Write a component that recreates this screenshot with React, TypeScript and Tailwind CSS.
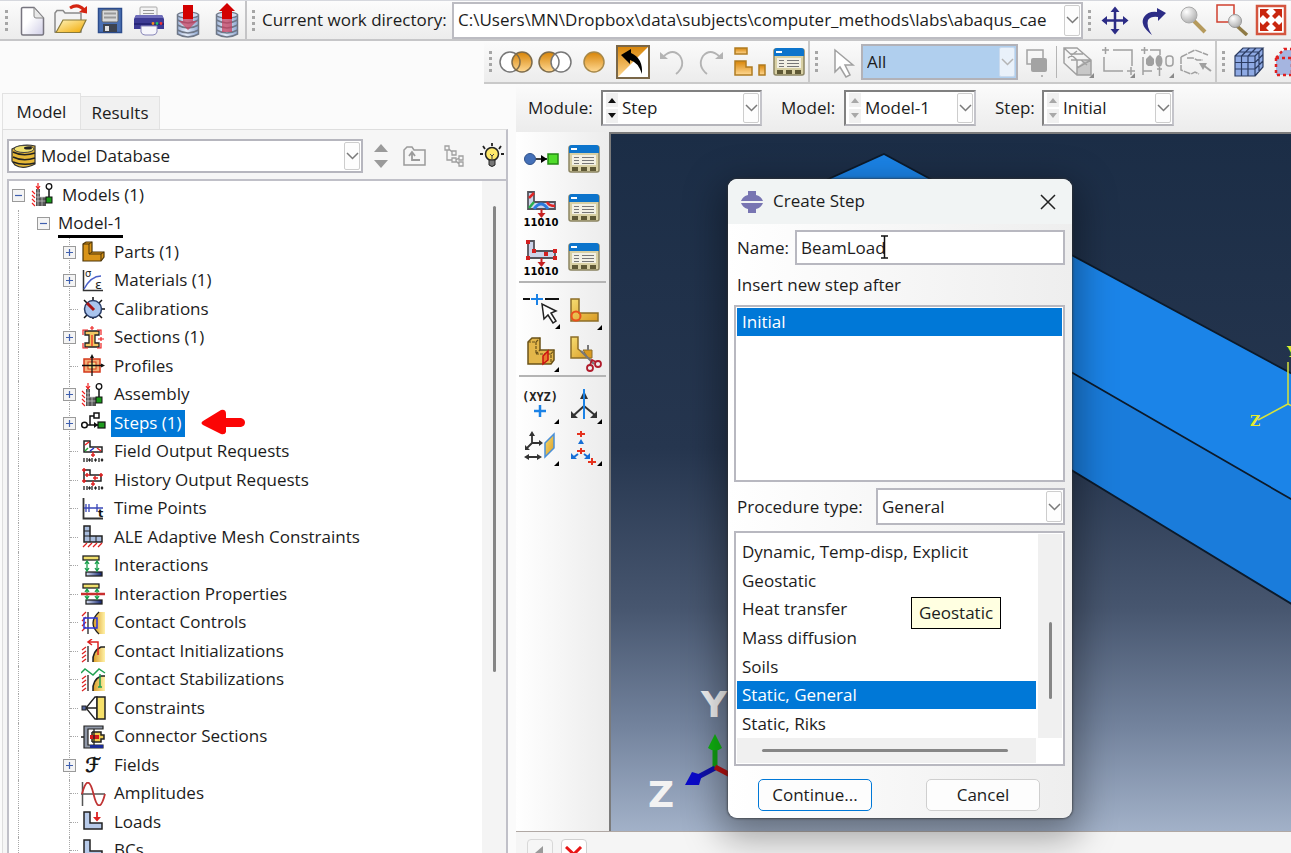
import React from "react";

const FONT = "font-['Open_Sans','Noto_Sans',sans-serif]";

interface SvgProps {
  children: React.ReactNode;
  w?: number;
  h?: number;
}

const Svg: React.FC<SvgProps> = ({ children, w = 32, h = 32 }) => (
  <svg width={w} height={h} viewBox={`0 0 ${w} ${h}`} fill="none" className="shrink-0" aria-hidden="true">
    {children}
  </svg>
);

const Defs = () => (
  <svg width="0" height="0" className="absolute" aria-hidden="true">
    <defs>
      <linearGradient id="orange" x1="0" y1="0" x2="0" y2="1">
        <stop offset="0" stopColor="#d88406" />
        <stop offset="1" stopColor="#ffd994" />
      </linearGradient>
      <linearGradient id="gold" x1="0" y1="0" x2="1" y2="1">
        <stop offset="0" stopColor="#f6dd72" />
        <stop offset="1" stopColor="#d99a22" />
      </linearGradient>
      <linearGradient id="folder" x1="0" y1="0" x2="1" y2="1">
        <stop offset="0" stopColor="#fff4bd" />
        <stop offset="1" stopColor="#f0a800" />
      </linearGradient>
      <linearGradient id="paper" x1="0" y1="0" x2="1" y2="1">
        <stop offset="0.4" stopColor="#ffffff" />
        <stop offset="1" stopColor="#cfcde6" />
      </linearGradient>
      <linearGradient id="steel" x1="0" y1="0" x2="1" y2="0">
        <stop offset="0" stopColor="#9db3d8" />
        <stop offset="0.4" stopColor="#e6edfa" />
        <stop offset="1" stopColor="#8fa8d2" />
      </linearGradient>
      <linearGradient id="navy" x1="0" y1="0" x2="1" y2="0">
        <stop offset="0" stopColor="#dbe3f6" />
        <stop offset="1" stopColor="#0d1f6b" />
      </linearGradient>
      <linearGradient id="cream" x1="0" y1="0" x2="1" y2="0">
        <stop offset="0" stopColor="#d99a22" />
        <stop offset="1" stopColor="#fff2a8" />
      </linearGradient>
      <radialGradient id="lens" cx="0.35" cy="0.3" r="0.8">
        <stop offset="0" stopColor="#ffffff" />
        <stop offset="1" stopColor="#a9a9a9" />
      </radialGradient>
    </defs>
  </svg>
);

/* ---------- toolbar icons ---------- */

const NewFile = () => (
  <Svg>
    <path d="M5.500 4.500Q5.500 3.500 7 3.500H18L27.500 14V29.500Q27.500 31 26 31H7Q5.500 31 5.500 29.500Z" fill="url(#paper)" stroke="#77757f" strokeWidth="1.500" />
    <path d="M18 3.500V12Q18 14 20 14H27.500Z" fill="#e8e8e8" stroke="#8a8a8a" />
  </Svg>
);

const OpenFile = () => (
  <Svg w={34}>
    <path d="M1 28V9L3 6.500H9L11 9H27V28Z" fill="#f3f3f3" stroke="#8a8a8a" strokeWidth="1.500" />
    <path d="M2 28.500L9 16H32L26 28.500Z" fill="url(#folder)" stroke="#8a7a3a" strokeWidth="1.200" />
    <path d="M16 4Q24-1 30 6" stroke="#d42512" strokeWidth="3" />
    <path d="M33 2V9.500L25 8Z" fill="#d42512" />
  </Svg>
);

const Save = () => (
  <Svg>
    <rect x="4.500" y="4.500" width="23" height="24" fill="#4a70b4" stroke="#2c4c8c" strokeWidth="1.500" />
    <rect x="8" y="6" width="16" height="12" rx="1.500" fill="#d9d9d9" stroke="#666" />
    <path d="M10 9.500H22M10 13.500H22" stroke="#9a9a9a" strokeWidth="2" />
    <rect x="9" y="20" width="14" height="8" fill="#3d4350" />
    <rect x="11" y="22" width="4" height="5" fill="#e2e2e2" />
  </Svg>
);

const Printer = () => (
  <Svg>
    <rect x="7" y="3" width="17" height="9" rx="1" fill="#f3f3f3" stroke="#aaa" />
    <path d="M10 6.500H21M10 9.500H21" stroke="#999" />
    <path d="M3 11H29L31 15V25H1V15Z" fill="#3d3b94" />
    <path d="M3 11H29L30.500 14H1.500Z" fill="#6f6dba" />
    <rect x="1" y="19" width="30" height="2" fill="#272678" />
    <circle cx="20" cy="19.500" r="1.400" fill="#f58a1f" />
    <circle cx="24" cy="19.500" r="1.400" fill="#1fbf6a" />
    <circle cx="28" cy="19.500" r="1.400" fill="#e33" />
    <path d="M8 22H24V28Q23 31 20 31H12Q9 31 8 28Z" fill="#f6f6fb" stroke="#8886b8" />
  </Svg>
);

const Database = ({ up = false }: { up?: boolean }) => (
  <Svg h={36}>
    <path d="M5.500 13V32Q16 38 26.500 32V13Z" fill="url(#steel)" stroke="#6f7888" strokeWidth="1.500" />
    <ellipse cx="16" cy="13" rx="10.500" ry="3" fill="#cfdaf0" stroke="#6f7888" strokeWidth="1.200" />
    <path d="M5.500 18Q16 24 26.500 18M5.500 23Q16 29 26.500 23M5.500 28Q16 34 26.500 28" stroke="#6f7888" strokeWidth="1.500" />
    {up ? (
      <>
        <path d="M11 17H21V30H11Z" fill="#c4405f" opacity="0.75" />
        <path d="M16 1L24 9H21V17H11V9H8Z" fill="#d30000" />
      </>
    ) : (
      <>
        <path d="M11 15H21V19H25L16 28L7 19H11Z" fill="#c4405f" opacity="0.75" />
        <path d="M11 3H21V17H11Z" fill="#d30000" />
      </>
    )}
  </Svg>
);

const Move = () => (
  <Svg>
    <path d="M16 5V28M4 16.500H28" stroke="#2c2c86" strokeWidth="2.500" />
    <path d="M16 2.500L20.500 8H11.500ZM16 30.500L20.500 25H11.500ZM2.500 16.500L8 12V21ZM29.500 16.500L24 12V21Z" fill="#2c2c86" />
  </Svg>
);

const Rotate = () => (
  <Svg>
    <path d="M14 31Q1 21 6 13Q10 7 19 8V4L28 9L20 17V13Q13 12 10 16Q8 22 14 31Z" fill="#2c2c86" />
  </Svg>
);

const Magnify = () => (
  <Svg>
    <path d="M17 17L28 28" stroke="#b59a5c" strokeWidth="4" />
    <circle cx="12" cy="11" r="8" fill="url(#lens)" stroke="#aaa" />
  </Svg>
);

const BoxZoom = () => (
  <Svg w={34}>
    <rect x="2" y="1" width="17" height="17" stroke="#d0402f" strokeWidth="1.500" />
    <path d="M22 22L32 31" stroke="#8f7a45" strokeWidth="3.500" />
    <circle cx="20" cy="17" r="6.500" fill="url(#lens)" stroke="#999" />
  </Svg>
);

const FitView = () => (
  <Svg>
    <rect x="2" y="2" width="28" height="28" fill="#fff" stroke="#d4553f" strokeWidth="2.500" />
    <path d="M5 5H14L11 8L15 12L12 15L8 11L5 14ZM27 5V14L24 11L20 15L17 12L21 8L18 5ZM5 27V18L8 21L12 17L15 20L11 24L14 27ZM27 27H18L21 24L17 20L20 17L24 21L27 18Z" fill="#c9270f" />
  </Svg>
);

const CirclesRight = () => (
  <Svg w={34}>
    <circle cx="11" cy="16" r="10" fill="#fff" stroke="#777" strokeWidth="1.500" />
    <circle cx="23" cy="16" r="10" fill="url(#orange)" stroke="#7d6b4a" strokeWidth="1.500" />
    <path d="M17 8A10 10 0 0 1 17 24" stroke="#7d6b4a" strokeWidth="1.500" />
  </Svg>
);

const CirclesLeft = () => (
  <Svg w={34}>
    <circle cx="11" cy="16" r="10" fill="url(#orange)" stroke="#7d6b4a" strokeWidth="1.500" />
    <circle cx="23" cy="16" r="10" fill="#fff" stroke="#777" strokeWidth="1.500" />
    <path d="M17 8A10 10 0 0 1 17 24" stroke="#777" strokeWidth="1.500" />
  </Svg>
);

const Circle = () => (
  <Svg>
    <circle cx="16" cy="16" r="10" fill="url(#orange)" stroke="#a78848" strokeWidth="1.500" />
  </Svg>
);

const ReplaceView = () => (
  <Svg w={34} h={34}>
    <rect x="1" y="1" width="32" height="32" fill="#fff" />
    <path d="M1 1H33L1 33Z" fill="url(#orange)" />
    <rect x="1" y="1" width="32" height="32" stroke="#7a6748" strokeWidth="2" />
    <path d="M5 10L15 4V8Q27 13 26 29Q22 17 14 15V19Z" fill="#000" />
  </Svg>
);

const Undo = ({ flip = false }: { flip?: boolean }) => (
  <Svg>
    <g transform={flip ? "matrix(-1 0 0 1 32 0)" : undefined}>
      <path d="M8 10Q17 2 24 10Q30 20 20 28" stroke="#b3b3b3" strokeWidth="1.800" />
      <path d="M4 6V13H12Z" fill="#b3b3b3" />
    </g>
  </Svg>
);

const ColorBlocks = () => (
  <Svg>
    <path d="M1 2H13V8H1Z" fill="url(#orange)" stroke="#b07c22" strokeWidth="1.500" />
    <path d="M1 15H12V21H18V29H1Z" fill="url(#orange)" stroke="#b07c22" strokeWidth="1.500" />
    <path d="M25 19H31V29H25Z" fill="url(#orange)" stroke="#b07c22" strokeWidth="1.500" />
  </Svg>
);

const Manager = () => (
  <Svg h={28}>
    <rect x="1" y="1" width="30" height="26" rx="2" fill="#d8d0a4" stroke="#8b8462" strokeWidth="1.500" />
    <path d="M1 3Q1 0 4 0H28Q31 0 31 3V8H1Z" fill="#0c74cc" />
    <rect x="3" y="3" width="6" height="2" fill="#fff" />
    <rect x="4" y="10" width="24" height="10" fill="#f2f0e4" />
    <path d="M6 12.500H11M6 15.500H11M6 18.500H11M14 12.500H26M14 15.500H26M14 18.500H26" stroke="#777" strokeWidth="1.200" />
    <path d="M4 22H10V26H4ZM13 22H19V26H13ZM22 22H28V26H22Z" fill="#5f5936" />
  </Svg>
);

const Pointer = () => (
  <Svg>
    <path d="M9 4V26L14 21L20 31L24 29L19 19H27Z" fill="#fff" stroke="#a0a0a0" strokeWidth="1.500" />
  </Svg>
);

const Overlap = () => (
  <Svg w={24}>
    <rect x="2" y="4" width="16" height="14" stroke="#a3a3a3" strokeWidth="1.500" />
    <rect x="6" y="12" width="16" height="14" rx="2" fill="#a3a3a3" />
    <circle cx="17" cy="30" r="1" fill="#a3a3a3" />
  </Svg>
);

const WireCube = () => (
  <Svg>
    <path d="M1 2H14L28 14V29H14L1 17ZM1 2L14 14V29M14 14H28M7 8H20M5 12L14 5M14 22L28 14M8 14H18L24 19" stroke="#a0a0a0" strokeWidth="1.500" />
    <path d="M14 22L22 14H28V29H14Z" fill="#a0a0a0" opacity="0.5" />
    <path d="M31 27V32H26Z" fill="#8a8a8a" />
  </Svg>
);

const DragBox = () => (
  <Svg w={34}>
    <path d="M1 4H8M4.500 1V8M12 4H31V20M3 11V25H22M26 25H34M30 21V29" stroke="#a0a0a0" strokeWidth="1.500" />
    <path d="M34 27V32H29Z" fill="#8a8a8a" />
  </Svg>
);

const DragShapes = () => (
  <Svg w={34}>
    <path d="M1 4H8M4.500 1V8M10 4H20V9M3 11V29M3 25H12M17 23H22M19.500 21V30" stroke="#a0a0a0" strokeWidth="1.500" />
    <path d="M10 9L14 13V18L12 20H8L6 18V13Z" fill="#a0a0a0" />
    <ellipse cx="19" cy="15" rx="3.500" ry="6" fill="#a0a0a0" />
    <rect x="26" y="10" width="7" height="10" rx="3" stroke="#a0a0a0" strokeWidth="1.500" />
    <path d="M34 27V32H29Z" fill="#8a8a8a" />
  </Svg>
);

const Reshape = () => (
  <Svg w={34}>
    <path d="M2 11L16 4L29 9M2 11V24L12 28L16 26L20 28M8 12H14L18 14H24" stroke="#a0a0a0" strokeWidth="1.500" strokeDasharray="7 1" />
    <path d="M32 25L24 19" stroke="#a0a0a0" strokeWidth="2" />
    <path d="M20 17H28L24 24Z" fill="#a0a0a0" />
  </Svg>
);

const MeshCube = () => (
  <Svg>
    <path d="M2 10L10 2H30V21L22 30H2Z" fill="#8faae4" />
    <path d="M2 10H22V30H2ZM2 10L10 2H30L22 10M30 2V21L22 30M8.500 10V30M15 10V30M2 16.500H22M2 23H22M8.500 10L16.500 2M15 10L23 2M6 6H26V26M22 16.500L30 8.500M22 23L30 15" stroke="#2c3c62" strokeWidth="1.200" />
  </Svg>
);

const SeedCube = () => (
  <Svg>
    <path d="M4 12L12 4H32V29H4Z" fill="#a5b5e0" />
    <path d="M4 12V29H32M4 12L12 3H32M4 12H32M20 12V29" stroke="#e02020" strokeWidth="2.500" strokeDasharray="3 3" />
  </Svg>
);

/* ---------- toolbox icons ---------- */

const More = () => <path d="M36 31V36H31Z" fill="#000" />;

const CreateStep = () => (
  <Svg w={36}>
    <path d="M13 16H24" stroke="#000" strokeWidth="1.500" />
    <path d="M18 12L24 16L18 20Z" fill="#000" />
    <circle cx="7" cy="16" r="5.500" fill="#4470b8" stroke="#31528a" />
    <rect x="25" y="11" width="10" height="10" fill="#4fdc2a" stroke="#258a14" strokeWidth="1.500" />
  </Svg>
);

const OutputIcon = ({ history = false }: { history?: boolean }) => (
  <Svg w={36} h={38}>
    <path d="M5 3H11V13H32V20H5Z" fill="#ccd4ea" stroke="#54545c" strokeWidth="1.800" />
    {history ? (
      <path d="M3 2H7V6H3ZM9 11H13V15H9ZM3 18H7V22H3ZM21 14H25V18H21ZM30 11H34V15H30ZM30 18H34V22H30Z" fill="#d32020" />
    ) : (
      <>
        <path d="M6 9L11 4M24 13Q26 17 32 17" stroke="#e02626" strokeWidth="2.500" />
        <path d="M6 19L11 13" stroke="#28b04c" strokeWidth="2.500" />
        <path d="M11 20Q18 10 25 20" stroke="#2c7be0" strokeWidth="3" />
      </>
    )}
    <path d="M18.500 20V26" stroke="#c62222" strokeWidth="2" />
    <path d="M14.500 24H22.500L18.500 29Z" fill="#c62222" />
    <text x="18" y="37" textAnchor="middle" fontSize="10" fontWeight="700" fontFamily="DejaVu Sans, sans-serif" fill="#000">11010</text>
  </Svg>
);

const PartitionEdge = () => (
  <Svg w={38} h={36}>
    <path d="M1 5H8M23 5H37" stroke="#111" strokeWidth="2" />
    <path d="M9 5H21M15 0V11" stroke="#1b82e6" strokeWidth="2" />
    <path d="M20 10L22 25L26 21L31 29L34 27L29 19L34 17Z" fill="#fff" stroke="#222" strokeWidth="1.500" />
    <path d="M38 30V35H33Z" fill="#000" />
  </Svg>
);

const PartitionCircle = () => (
  <Svg w={36} h={36}>
    <path d="M5 5H13V19H32V27H5Z" fill="url(#gold)" stroke="#8c6d28" strokeWidth="1.500" />
    <circle cx="10" cy="22" r="4.500" stroke="#e8501c" strokeWidth="2" />
    <More />
  </Svg>
);

const PartitionCell = () => (
  <Svg w={36} h={36}>
    <path d="M5 6L9 2H17V14H31V24L28 28H5Z" fill="#e3b64a" stroke="#6b531a" strokeWidth="1.500" />
    <path d="M5 6H13V18H28V28M13 6L17 2M13 18L17 14M28 18L31 14" stroke="#6b531a" strokeWidth="1.200" strokeDasharray="3 1" />
    <path d="M20 20L25 15V24L20 28Z" fill="#e8792c" stroke="#c11" strokeWidth="1.500" />
    <More />
  </Svg>
);

const CutPart = () => (
  <Svg w={38} h={40}>
    <path d="M6 3H13V15L24 24H6Z" fill="url(#gold)" stroke="#8c6d28" strokeWidth="1.500" />
    <path d="M18 16H27V24H23Z" fill="#d99a22" stroke="#8c6d28" />
    <path d="M16 17L29 30M23 11V16" stroke="#777" strokeWidth="2" />
    <circle cx="25" cy="34" r="3" stroke="#b01c2c" strokeWidth="1.800" />
    <circle cx="33" cy="30" r="3" stroke="#b01c2c" strokeWidth="1.800" />
    <path d="M25 31L27 26L31 28" stroke="#b01c2c" strokeWidth="1.800" />
  </Svg>
);

const DatumPoint = () => (
  <Svg w={36} h={36}>
    <text x="17" y="13" textAnchor="middle" fontSize="12" fontWeight="700" fontFamily="DejaVu Sans Mono, monospace" fill="#222">(XYZ)</text>
    <path d="M17 17V29M11 23H23" stroke="#1b82e6" strokeWidth="2.500" />
    <More />
  </Svg>
);

const DatumAxis = () => (
  <Svg w={36} h={36}>
    <path d="M18 18L7 28M18 18L30 28M18 5V20" stroke="#333" strokeWidth="2" />
    <path d="M14 11L18 3L22 11ZM5 23V30H12ZM31 23V30H24Z" fill="#333" />
    <path d="M18 1V31" stroke="#1b82e6" strokeWidth="2" />
    <More />
  </Svg>
);

const DatumPlane = () => (
  <Svg w={36} h={36}>
    <path d="M9 13V4M9 13H17M9 13L4 18M4 27H16" stroke="#333" strokeWidth="1.800" />
    <path d="M6 6L9 1L12 6ZM16 10L20 13L16 16ZM2 15V20H7ZM6 24L1 27L6 30ZM14 24L19 27L14 30Z" fill="#333" />
    <path d="M22 13L31 4V18L22 27Z" fill="url(#gold)" stroke="#4a90d9" strokeWidth="1.500" />
    <More />
  </Svg>
);

const DatumCsys = () => (
  <Svg w={36} h={36}>
    <path d="M11 4H19M15 1V7M11 21H19M15 18V24M22 32H30M26 28V35" stroke="#e5321e" strokeWidth="2" />
    <path d="M12 14L15 9L18 14ZM5 23L11 29H5ZM24 23L18 29H24Z" fill="#176fd6" />
    <path d="M8 27L12 24M22 27L18 24" stroke="#176fd6" strokeWidth="2" />
    <More />
  </Svg>
);

/* ---------- tree icons ---------- */

const AssemblyIcon = () => (
  <Svg w={24} h={24}>
    <path d="M5 6H9V14H15V23H5Z" fill="#555" />
    <path d="M5 10H9M5 14H15M5 18H15M7 6V23M11 14V23" stroke="#cfcfcf" strokeWidth="0.700" />
    <path d="M7 0V5M5 3L7 6L9 3M1 8L4 11M1 12L4 15M1 16L4 19M1 20L4 23" stroke="#e22" strokeWidth="1.200" />
    <path d="M18 6V14" stroke="#111" strokeWidth="1.500" />
    <circle cx="18" cy="3.500" r="2.800" fill="#fff" stroke="#111" strokeWidth="1.300" />
    <rect x="15" y="14" width="6" height="6" fill="#1a9a1a" stroke="#111" />
  </Svg>
);

const PartIcon = () => (
  <Svg w={24} h={24}>
    <path d="M2 4L5 2H11V12H23V17L20 21H2Z" fill="#d99418" stroke="#4c3508" strokeWidth="1.200" />
    <path d="M2 4H8V14H20V21M8 4L11 2M8 14L11 12M20 14L23 12" stroke="#4c3508" />
  </Svg>
);

const MaterialIcon = () => (
  <Svg w={24} h={24}>
    <path d="M2.500 1V21.500H22" stroke="#333" strokeWidth="1.500" />
    <path d="M3 20Q10 7 20 7" stroke="#4a60c8" strokeWidth="1.500" />
    <text x="4" y="8" fontSize="10" fontFamily="DejaVu Sans" fill="#222">σ</text>
    <text x="14" y="20" fontSize="13" fontFamily="DejaVu Sans" fill="#222">ε</text>
  </Svg>
);

const CalibrationIcon = () => (
  <Svg w={24} h={24}>
    <path d="M12 0V4M21 12H24M3 3L6 6M21 3L18 6M3 21L6 18M21 21L18 18M12 20V22" stroke="#111" strokeWidth="1.500" />
    <circle cx="12" cy="12" r="8.500" fill="#a9c4ee" stroke="#2a3d68" strokeWidth="1.500" />
    <path d="M6 6L13 13" stroke="#a81616" strokeWidth="3" />
  </Svg>
);

const SectionIcon = () => (
  <Svg w={24} h={24}>
    <path d="M4 5H18V9H14V17H18V21H4V17H8V9H4Z" fill="#f4c862" stroke="#222" strokeWidth="1.300" />
    <path d="M2 9V4H7M20 9V4H16M2 17V22H7M20 17V22H16M11 0V4M9 2H13M17 13H23M20 11V15M11 9V20" stroke="#e22" strokeWidth="1.200" />
  </Svg>
);

const ProfileIcon = () => (
  <Svg w={24} h={24}>
    <rect x="3" y="5" width="16" height="13" fill="#f4b078" stroke="#d43a1c" strokeWidth="1.500" />
    <rect x="7" y="8" width="8" height="7" fill="#fbe08c" stroke="#d43a1c" />
    <path d="M11 2V22M1 11.500H22" stroke="#111" strokeWidth="1.300" />
    <path d="M9 4L11 0L13 4ZM20 9.500L24 11.500L20 13.500Z" fill="#111" />
  </Svg>
);

const StepIcon = () => (
  <Svg w={26} h={24}>
    <circle cx="3.500" cy="14" r="2.800" stroke="#111" strokeWidth="1.500" />
    <path d="M7 14H17M9 14V5H13" stroke="#111" strokeWidth="1.500" />
    <rect x="13" y="2" width="5" height="5" fill="#fff" stroke="#111" strokeWidth="1.500" />
    <path d="M13 11L17 14L13 17Z" fill="#111" />
    <rect x="17" y="11" width="7" height="6" fill="#1f9a1f" stroke="#111" strokeWidth="1.200" />
  </Svg>
);

/* row of 1/0 marks under the output request icons */
const Bits = () => (
  <>
    <path d="M3 18V22M6 18V22M11 18V22M18 18V22" stroke="#222" strokeWidth="1.300" />
    <path d="M8.500 18L10 20L8.500 22L7 20ZM14.500 18L16 20L14.500 22L13 20ZM21 18L22.500 20L21 22L19.500 20Z" fill="#222" />
  </>
);

const FieldOutIcon = () => (
  <Svg w={24} h={24}>
    <path d="M3 1H9V7H21V12H3Z" stroke="#222" strokeWidth="1.500" />
    <path d="M4 5L8 2M16 8L20 11" stroke="#e22" strokeWidth="1.500" />
    <path d="M4 11L7 8" stroke="#2a3" strokeWidth="1.500" />
    <path d="M9 11L13 8" stroke="#23c" strokeWidth="1.500" />
    <path d="M12 12V17M10 15H14" stroke="#d22" strokeWidth="1.500" />
    <Bits />
  </Svg>
);

const HistoryOutIcon = () => (
  <Svg w={24} h={24}>
    <path d="M3 2H9V7H20V13H3Z" stroke="#222" strokeWidth="1.500" />
    <path d="M1 2H5M3 0V4M4 7H9M6 5V9M18 7H22M20 5V9M1 13H5M3 11V15M12 10H17M14 8V12M10 16H14M12 13V18" stroke="#d22" strokeWidth="1.500" />
    <Bits />
  </Svg>
);

const TimeIcon = () => (
  <Svg w={24} h={24}>
    <path d="M2.500 1V21.500H22" stroke="#333" strokeWidth="1.800" />
    <path d="M3 11H22M5 7V15M8 7V15M16 7V15" stroke="#3846b8" strokeWidth="1.300" />
    <text x="17" y="20" fontSize="11" fontWeight="700" fontFamily="DejaVu Sans" fill="#111">t</text>
  </Svg>
);

const AleIcon = () => (
  <Svg w={24} h={24}>
    <path d="M3 1H9V11H21V17H3Z" fill="#a9bcdc" stroke="#222" strokeWidth="1.500" />
    <path d="M3 6H9M3 11H9V17M15 11V17" stroke="#222" />
    <path d="M2 22L6 18M7 22L11 18M12 22L16 18M17 22L21 18" stroke="#d22" strokeWidth="1.300" />
  </Svg>
);

const InteractionIcon = ({ property = false }: { property?: boolean }) => (
  <Svg w={24} h={24}>
    <rect x="2" y="2" width="16" height="4" fill="#f0df6c" stroke="#222" strokeWidth="1.300" />
    <rect x="5" y="18" width="16" height="4" fill="url(#navy)" stroke="#222" strokeWidth="1.300" />
    <path d="M6 7V17M16 7V17M4 10L6 7L8 10M4 14L6 17L8 14M14 10L16 7L18 10M14 14L16 17L18 14" stroke="#19a04c" strokeWidth="1.300" />
    {property && <path d="M0 12H24" stroke="#c93030" strokeWidth="2.500" />}
  </Svg>
);

const ContactControlIcon = () => (
  <Svg w={26} h={24}>
    <path d="M24 1H18Q6 12 18 23H24Z" fill="url(#cream)" />
    <path d="M18 1Q6 12 18 23" stroke="#222" strokeWidth="1.300" />
    <path d="M1 5L5 1M1 10L5 6M1 15L5 11M1 20L5 16" stroke="#d22" strokeWidth="1.300" />
    <path d="M7 1V23" stroke="#222" strokeWidth="1.300" />
    <rect x="3" y="7" width="13" height="10" stroke="#2a34d8" strokeWidth="1.500" />
  </Svg>
);

const ContactIcon = ({ stable = false }: { stable?: boolean }) => (
  <Svg w={26} h={24}>
    <path d="M24 8H20Q11 12 12 23H24Z" fill="url(#cream)" />
    <path d="M24 8H20Q11 12 12 23" stroke="#222" strokeWidth="1.500" />
    <path d="M1 11L5 8M1 15L5 12M1 19L5 16M1 23L5 20" stroke="#d22" strokeWidth="1.300" />
    <path d="M7 7V23" stroke="#222" strokeWidth="1.300" />
    {stable ? (
      <path d="M0 5L4 1L12 7L18 1L24 5M19 6V19M17 19H21" stroke="#1fa050" strokeWidth="1.500" />
    ) : (
      <path d="M7 3H17V16M11 0L7 3L11 6" stroke="#d22" strokeWidth="1.500" />
    )}
  </Svg>
);

const ConstraintIcon = () => (
  <Svg w={26} h={24}>
    <path d="M5 12L14 1H16V23H14ZM5 12H16" fill="#fff" stroke="#222" strokeWidth="1.300" />
    <rect x="16" y="1" width="8" height="22" fill="#f6e06a" stroke="#222" strokeWidth="1.500" />
    <rect x="1" y="10" width="4" height="4" fill="#5567a0" stroke="#222" />
  </Svg>
);

const ConnectorIcon = () => (
  <Svg w={26} h={24}>
    <path d="M22 1H3V23H22V20H7V4H22Z" fill="#9098a8" stroke="#222" strokeWidth="1.200" />
    <path d="M9 20H22V23H9Z" fill="#1b2b98" />
    <path d="M11 7V17M11 7H20V10H23V14H20V17H11" stroke="#222" strokeWidth="1.500" fill="#f0cc50" />
    <rect x="9" y="10" width="9" height="4" fill="#d41c1c" />
    <path d="M0 12H3M13 4V20" stroke="#222" strokeWidth="1.300" />
  </Svg>
);

const FieldIcon = () => (
  <Svg w={26} h={26}>
    <text x="12" y="20" textAnchor="middle" fontSize="20" fontFamily="DejaVu Sans, sans-serif" fill="#111" stroke="#111" strokeWidth="0.700">ℱ</text>
  </Svg>
);

const AmplitudeIcon = () => (
  <Svg w={26} h={24}>
    <path d="M1.500 0V24M0 12H24" stroke="#555" strokeWidth="1.500" />
    <path d="M1 12Q7-11 12.500 12T24 12" stroke="#c03434" strokeWidth="1.800" />
  </Svg>
);

const LoadIcon = () => (
  <Svg w={24} h={24}>
    <path d="M3 2H9V13H21V19H3Z" fill="#b8cbea" stroke="#222" strokeWidth="1.500" />
    <path d="M16 2V10" stroke="#d22" strokeWidth="1.800" />
    <path d="M12 7H20L16 11.500Z" fill="#d22" />
  </Svg>
);

const BcIcon = () => (
  <Svg w={24} h={24}>
    <path d="M3 1H9V12H21V18H3Z" fill="#b8cbea" stroke="#222" strokeWidth="1.500" />
  </Svg>
);

/* ---------- shared bits ---------- */

const Grip = () => (
  <div className="flex w-[12px] shrink-0 flex-col items-center gap-[3px]">
    {[0, 1, 2, 3].map((i) => (
      <span key={i} className="h-[3px] w-[3px] bg-[#a6a6a6]" />
    ))}
  </div>
);

const Tool = ({ label, children }: { label: string; children: React.ReactNode }) => (
  <button type="button" aria-label={label} className="flex w-[39px] shrink-0 items-center justify-center">
    {children}
  </button>
);

const Chevron = ({ muted = false }: { muted?: boolean }) => (
  <span
    className={`pointer-events-none absolute inset-y-[1px] right-[1px] flex w-[16px] items-center justify-center rounded-[2px] border ${
      muted ? "border-[#c9daee] bg-[#e9f1fa]" : "border-[#cdcdcd] bg-[#fdfdfd]"
    }`}
  >
    <svg width="13" height="8" viewBox="0 0 13 8" fill="none">
      <path d="M1 1L6.500 6.500L12 1" stroke={muted ? "#b5b5b5" : "#7a7a7a"} strokeWidth="1.500" />
    </svg>
  </span>
);

const Arrows = ({ muted = false }: { muted?: boolean }) => (
  <svg width="12" height="30" viewBox="0 0 12 30" className="ml-[3px] shrink-0" aria-hidden="true">
    <rect width="12" height="14" fill="#f0f0f0" />
    <rect y="16" width="12" height="14" fill="#f0f0f0" />
    <path d="M2 10L6 5L10 10ZM2 20H10L6 25Z" fill={muted ? "#a8a8a8" : "#111"} />
  </svg>
);

interface ModuleFieldProps {
  id: string;
  label: string;
  value: string;
  labelWidth: string;
  width: string;
  muted?: boolean;
}

const ModuleField: React.FC<ModuleFieldProps> = ({ id, label, value, labelWidth, width, muted }) => (
  <div className="flex shrink-0 items-center">
    <label htmlFor={id} className={`${labelWidth} whitespace-nowrap`}>
      {label}
    </label>
    <div className={`${width} relative flex h-[36px] items-center border-2 border-t-[#808080] border-r-[#c4c4ca] border-b-[#b4b4ba] border-l-[#808080] bg-white`}>
      <Arrows muted={muted} />
      <select id={id} defaultValue={value} className="h-full w-full appearance-none pl-[4px] outline-none">
        <option>{value}</option>
      </select>
      <Chevron />
    </div>
  </div>
);

/* ---------- top bars ---------- */

const TopToolbar = () => (
  <header className="flex h-[41px] shrink-0 overflow-hidden border-t border-b-2 border-t-[#d6d8de] border-b-[#c6c6c8] bg-linear-to-b from-[#fcfcfc] to-[#ececec]">
    <div className="flex w-[247px] shrink-0 items-center border-r-2 border-[#c4c4c6]">
      <Grip />
      <Tool label="New"><NewFile /></Tool>
      <Tool label="Open"><OpenFile /></Tool>
      <Tool label="Save"><Save /></Tool>
      <Tool label="Print"><Printer /></Tool>
      <Tool label="Import database"><Database /></Tool>
      <Tool label="Export database"><Database up /></Tool>
    </div>
    <div className="flex min-w-0 flex-1 items-center">
      <Grip />
      <label htmlFor="cwd" className="w-[193px] shrink-0 pl-[3px] whitespace-nowrap">
        Current work directory:
      </label>
      <div className="relative h-[37px] min-w-0 flex-1 border-2 border-[#bcbcc2] bg-white">
        <select id="cwd" className="h-full w-full appearance-none pl-[4px] outline-none">
          <option>C:\Users\MN\Dropbox\data\subjects\computer_methods\labs\abaqus_cae</option>
        </select>
        <Chevron />
      </div>
    </div>
    <div className="flex w-[208px] shrink-0 items-center overflow-hidden">
      <Grip />
      <Tool label="Pan view"><Move /></Tool>
      <Tool label="Rotate view"><Rotate /></Tool>
      <Tool label="Magnify view"><Magnify /></Tool>
      <Tool label="Box zoom"><BoxZoom /></Tool>
      <Tool label="Auto-fit view"><FitView /></Tool>
    </div>
  </header>
);

const ViewToolbar = () => (
  <div className="ml-[484px] flex h-[43px] shrink-0 items-center overflow-hidden border-b-2 border-[#c9c9c9] bg-linear-to-b from-[#fbfbfb] to-[#ececec]">
    <Grip />
    <Tool label="Replace all"><CirclesRight /></Tool>
    <Tool label="Add"><CirclesLeft /></Tool>
    <Tool label="Either"><Circle /></Tool>
    <Tool label="Replace view"><ReplaceView /></Tool>
    <Tool label="Undo"><Undo /></Tool>
    <Tool label="Redo"><Undo flip /></Tool>
    <Tool label="Color code"><ColorBlocks /></Tool>
    <Tool label="Display group manager"><Manager /></Tool>
    <span className="h-full border-l-2 border-[#c9c9c9]" />
    <Grip />
    <Tool label="Select"><Pointer /></Tool>
    <div className="relative h-[36px] w-[157px] shrink-0 border-2 border-[#b2b2b8] bg-[#b0cfee]">
      <select aria-label="Selection filter" className="h-full w-full appearance-none pl-[4px] outline-none">
        <option>All</option>
      </select>
      <Chevron muted />
    </div>
    <div className="flex w-[39px] shrink-0 justify-center border-r border-[#b5b5b5]"><Overlap /></div>
    <div className="flex shrink-0 pl-[2px]">
      <Tool label="Select inside"><WireCube /></Tool>
      <Tool label="Drag rectangle"><DragBox /></Tool>
      <Tool label="Drag shapes"><DragShapes /></Tool>
      <Tool label="Drag polygon"><Reshape /></Tool>
    </div>
    <span className="h-full border-l-2 border-[#c9c9c9]" />
    <Grip />
    <Tool label="Mesh part"><MeshCube /></Tool>
    <Tool label="Seed part"><SeedCube /></Tool>
  </div>
);

/* ---------- model tree ---------- */

interface TreeItem {
  label: string;
  icon: React.ReactNode;
  expandable?: boolean;
  selected?: boolean;
}

const items: TreeItem[] = [
  { label: "Parts (1)", icon: <PartIcon />, expandable: true },
  { label: "Materials (1)", icon: <MaterialIcon />, expandable: true },
  { label: "Calibrations", icon: <CalibrationIcon /> },
  { label: "Sections (1)", icon: <SectionIcon />, expandable: true },
  { label: "Profiles", icon: <ProfileIcon /> },
  { label: "Assembly", icon: <AssemblyIcon />, expandable: true },
  { label: "Steps (1)", icon: <StepIcon />, expandable: true, selected: true },
  { label: "Field Output Requests", icon: <FieldOutIcon /> },
  { label: "History Output Requests", icon: <HistoryOutIcon /> },
  { label: "Time Points", icon: <TimeIcon /> },
  { label: "ALE Adaptive Mesh Constraints", icon: <AleIcon /> },
  { label: "Interactions", icon: <InteractionIcon /> },
  { label: "Interaction Properties", icon: <InteractionIcon property /> },
  { label: "Contact Controls", icon: <ContactControlIcon /> },
  { label: "Contact Initializations", icon: <ContactIcon /> },
  { label: "Contact Stabilizations", icon: <ContactIcon stable /> },
  { label: "Constraints", icon: <ConstraintIcon /> },
  { label: "Connector Sections", icon: <ConnectorIcon /> },
  { label: "Fields", icon: <FieldIcon />, expandable: true },
  { label: "Amplitudes", icon: <AmplitudeIcon /> },
  { label: "Loads", icon: <LoadIcon /> },
  { label: "BCs", icon: <BcIcon /> },
];

const Expander = ({ open = false }: { open?: boolean }) => (
  <button
    type="button"
    aria-label={open ? "Collapse" : "Expand"}
    className="flex h-[13px] w-[13px] shrink-0 items-center justify-center border border-[#9a9a9a] bg-[#f4f4f4]"
  >
    <svg width="9" height="9" viewBox="0 0 9 9">
      <path d={open ? "M1 4.500H8" : "M1 4.500H8M4.500 1V8"} stroke="#3f5fae" strokeWidth="1.200" />
    </svg>
  </button>
);

const ModelTree = () => (
  <div className="flex min-h-0 flex-1 overflow-hidden border-t-2 border-l-2 border-[#c0c0c8] bg-white">
    <ul role="tree" className="grid h-[684px] min-w-0 flex-1 auto-rows-fr">
      <li role="treeitem" className="flex items-center pl-[3px]">
        <Expander open />
        <span className="ml-[6px] flex w-[28px]"><AssemblyIcon /></span>
        <span className="pl-[3px]">Models (1)</span>
      </li>
      <li role="treeitem" className="flex items-center pl-[9px]">
        <span className="w-[19px] self-stretch border-l border-dotted border-[#a8a8a8]" />
        <Expander open />
        <span className="ml-[8px] border-b-[3px] border-black leading-[25px]">Model-1</span>
      </li>
      {items.map((item) => (
        <li key={item.label} role="treeitem" aria-selected={!!item.selected} className="flex items-center pl-[9px]">
          <span className="w-[51px] shrink-0 self-stretch border-l border-dotted border-[#a8a8a8]" />
          <span className="flex w-[12px] shrink-0 items-center self-stretch border-l border-dotted border-[#a8a8a8]">
            {item.expandable ? (
              <span className="-ml-[7px]"><Expander /></span>
            ) : (
              <span className="w-[8px] border-t border-dotted border-[#a8a8a8]" />
            )}
          </span>
          <span className="flex w-[30px] shrink-0">{item.icon}</span>
          <span className={`h-[27px] px-[3px] leading-[26px] ${item.selected ? "bg-[#0078d7] text-white" : ""}`}>
            {item.label}
          </span>
          {item.selected && (
            <svg width="44" height="28" viewBox="0 0 44 28" className="ml-[16px] shrink-0" aria-hidden="true">
              <path d="M2 12L20 1Q25 0 25 5V9H40Q44 10 44 13.500Q44 17 40 18H25V23Q24 26 20 25L2 16Q-1 14 2 12Z" fill="#fb0505" />
            </svg>
          )}
        </li>
      ))}
    </ul>
    <div className="flex w-[24px] justify-center bg-[#f4f4f4] pt-[25px]">
      <span className="h-[466px] w-[3px] rounded-full bg-[#868686]" />
    </div>
  </div>
);

const LeftPanel = () => (
  <aside className="flex w-[508px] shrink-0 flex-col pt-[9px]">
    <div role="tablist" className="flex items-end pl-[2px]">
      <button type="button" role="tab" aria-selected="true" className="h-[36px] w-[79px] border border-b-0 border-[#e2e2e2] bg-[#f9f9f9]">
        Model
      </button>
      <button type="button" role="tab" aria-selected="false" className="h-[33px] w-[79px] border border-b-0 border-l-0 border-[#e2e2e2] bg-[#f1f1f1]">
        Results
      </button>
    </div>
    <div className="ml-[2px] flex min-h-0 flex-1 flex-col border-t border-r-2 border-l border-[#dedede] border-r-[#c0c0c8] bg-[#f6f6f6] pt-[9px] pl-[4px]">
      <div className="mb-[6px] flex h-[34px] shrink-0 items-center">
        <div className="relative flex h-full w-[356px] shrink-0 items-center border-2 border-[#b6b6be] bg-white">
          <svg width="26" height="26" viewBox="0 0 26 26" className="ml-[2px] shrink-0" aria-hidden="true">
            <path d="M1 6Q12 0 24 3V21Q12 27 4 22L1 18Z" fill="#e6b838" stroke="#333" strokeWidth="1.200" />
            <path d="M2 9Q12 14 24 10M2 14Q12 19 24 15M2 19Q12 23 24 20" stroke="#222" strokeWidth="1.500" fill="none" />
            <ellipse cx="13" cy="6" rx="10" ry="3.500" fill="#f0e070" stroke="#444" />
            <ellipse cx="17" cy="5" rx="4" ry="1.500" fill="#222" />
          </svg>
          <select aria-label="Tree root" className="h-full w-full appearance-none pl-[4px] outline-none">
            <option>Model Database</option>
          </select>
          <Chevron />
        </div>
        <button type="button" aria-label="Move" className="flex w-[36px] shrink-0 justify-center">
          <Svg w={14} h={26}><path d="M0 9L7 1L14 9ZM0 17H14L7 25Z" fill="#9a9a9a" /></Svg>
        </button>
        <button type="button" aria-label="Up one level" className="flex w-[31px] shrink-0 justify-center">
          <Svg w={24} h={24}>
            <path d="M1 21V6L4 3H9L11 6H22V21Z" stroke="#9b9b9b" strokeWidth="1.500" />
            <path d="M9 9V16H17M6 12L9 8L12 12" stroke="#9b9b9b" strokeWidth="1.800" />
          </Svg>
        </button>
        <button type="button" aria-label="Filter tree" className="flex w-[47px] shrink-0 justify-center">
          <Svg w={24} h={24}>
            <path d="M3 2H7V6H3ZM10 7H14V11H10ZM10 14H14V18H10ZM17 12H21V16H17ZM17 18H21V22H17ZM5 6V16H10M7 5L10 8M14 16L17 14M14 17L17 20" stroke="#a0a0a0" strokeWidth="1.300" />
          </Svg>
        </button>
        <button type="button" aria-label="Tips" className="flex w-[30px] shrink-0 justify-center">
          <Svg w={26} h={28}>
            <path d="M13 1V4M4 4L6 7M22 4L20 7M1 12H4M22 12H25" stroke="#222" strokeWidth="1.800" />
            <circle cx="13" cy="12" r="6.500" fill="#ffe96a" stroke="#222" strokeWidth="1.500" />
            <path d="M10 18H16V23Q13 26 10 23Z" fill="#777" stroke="#222" />
            <path d="M11 12L13 14L15 12M13 14V18" stroke="#444" />
          </Svg>
        </button>
      </div>
      <ModelTree />
    </div>
  </aside>
);

/* ---------- work area ---------- */

const Toolbox = () => (
  <nav className="w-[93px] shrink-0 bg-linear-to-r from-white to-[#ececec] px-[3px]">
    <div className="grid auto-rows-[49px] grid-cols-2 place-items-center border-b-2 border-[#b4b4b4] pt-[2px]">
      <button type="button" aria-label="Create step"><CreateStep /></button>
      <button type="button" aria-label="Step manager"><Manager /></button>
      <button type="button" aria-label="Create field output"><OutputIcon /></button>
      <button type="button" aria-label="Field output manager"><Manager /></button>
      <button type="button" aria-label="Create history output"><OutputIcon history /></button>
      <button type="button" aria-label="History output manager"><Manager /></button>
    </div>
    <div className="grid auto-rows-[42px] grid-cols-2 place-items-center border-b-2 border-[#b4b4b4] pt-[8px]">
      <button type="button" aria-label="Partition edge"><PartitionEdge /></button>
      <button type="button" aria-label="Partition face"><PartitionCircle /></button>
      <button type="button" aria-label="Partition cell"><PartitionCell /></button>
      <button type="button" aria-label="Cut part"><CutPart /></button>
    </div>
    <div className="grid auto-rows-[42px] grid-cols-2 place-items-center pt-[8px]">
      <button type="button" aria-label="Create datum point"><DatumPoint /></button>
      <button type="button" aria-label="Create datum axis"><DatumAxis /></button>
      <button type="button" aria-label="Create datum plane"><DatumPlane /></button>
      <button type="button" aria-label="Create datum csys"><DatumCsys /></button>
    </div>
  </nav>
);

const Viewport = () => (
  <main className="relative min-w-0 flex-1 overflow-hidden border-t-2 border-l-2 border-[#7b7b7b] bg-[linear-gradient(180deg,#1b2d46_0%,#26364f_45%,#47566f_68%,#73839d_85%,#a2b1c8_100%)]">
    <svg className="absolute inset-0 h-full w-full" aria-hidden="true">
      <g transform="translate(-611 -134)" strokeWidth="1.800">
        <path d="M884 154L1400 432V562L884 264L760 210Z" fill="#1b84e8" />
        <path d="M884 264L1400 562V670L884 356Z" fill="#1a7cdb" />
        <path d="M760 210L884 154L1400 432M884 264L1400 562M884 356L1400 670" stroke="#0c1a2a" fill="none" />
        <path d="M1288 362V404L1258 420M1288 404L1310 415" stroke="#d8e23a" fill="none" strokeWidth="1.500" />
        <g fontFamily="DejaVu Serif, serif" fontWeight="700" fontSize="14" fill="#e4ea2e">
          <text x="1250" y="426">Z</text>
          <text x="1287" y="357">Y</text>
        </g>
        <path d="M715 768V742" stroke="#12a012" strokeWidth="5" />
        <path d="M715 734L722 748Q715 753 708 748Z" fill="#10b410" />
        <path d="M715 768L698 777" stroke="#1010a8" strokeWidth="5" />
        <path d="M692 772L702 775L699 785H685Z" fill="#0a0ac8" />
        <path d="M715 767L740 780" stroke="#b81010" strokeWidth="5" />
        <g fontFamily="DejaVu Sans, sans-serif" fontWeight="700" fontSize="36" fill="#f2f2f2">
          <text x="701" y="717">Y</text>
          <text x="648" y="807">Z</text>
        </g>
      </g>
    </svg>
  </main>
);

/* ---------- dialog ---------- */

const procedures = [
  "Dynamic, Temp-disp, Explicit",
  "Geostatic",
  "Heat transfer",
  "Mass diffusion",
  "Soils",
  "Static, General",
  "Static, Riks",
];

const CreateStepDialog = () => (
  <section
    role="dialog"
    aria-labelledby="dialog-title"
    className="absolute top-[179px] left-[728px] w-[344px] overflow-hidden rounded-[9px] bg-linear-to-r from-white to-[#eeeeee] shadow-[0_12px_36px_8px_rgba(0,0,0,0.35),0_0_2px_1px_rgba(60,60,60,0.6)]"
  >
    <div className="flex h-[45px] items-center bg-[#f1f4f4] pr-[14px] pl-[12px]">
      <Svg w={24} h={24}>
        <path d="M8 1H16V5Q21 6 23 11H1Q3 6 8 5ZM1 13H23Q21 18 16 19V23H8V19Q3 18 1 13Z" fill="#7875b2" />
      </Svg>
      <h2 id="dialog-title" className="flex-1 pb-[2px] pl-[9px] text-[17px]">Create Step</h2>
      <button type="button" aria-label="Close">
        <Svg w={20} h={20}><path d="M3 3L17 17M17 3L3 17" stroke="#222" strokeWidth="1.500" /></Svg>
      </button>
    </div>
    <div className="pt-[6px] pr-[7px] pb-[7px] pl-[6px]">
      <div className="flex items-center">
        <label htmlFor="step-name" className="w-[61px] pl-[3px]">Name:</label>
        <div className="relative flex-1">
          <input id="step-name" type="text" defaultValue="BeamLoad" className="h-[35px] w-full border-2 border-[#b8b8c0] bg-white pl-[4px] outline-none" />
          <svg width="9" height="24" viewBox="0 0 9 24" className="absolute top-[5px] left-[85px]" aria-hidden="true">
            <path d="M1 1H8M4.500 1V23M1 23H8" stroke="#111" strokeWidth="1.500" />
          </svg>
        </div>
      </div>
      <p id="after-label" className="flex h-[40px] items-center pl-[3px]">Insert new step after</p>
      <div role="listbox" aria-labelledby="after-label" className="h-[177px] border-2 border-[#b8b8c0] bg-white p-px">
        <button type="button" role="option" aria-selected="true" className="block h-[28px] w-full bg-[#0078d7] pl-[5px] text-left text-white">
          Initial
        </button>
      </div>
      <div className="mt-[6px] flex items-center">
        <label htmlFor="procedure" className="w-[142px] pl-[3px]">Procedure type:</label>
        <div className="relative h-[37px] flex-1 border-2 border-[#b8b8c0] bg-white">
          <select id="procedure" className="h-full w-full appearance-none pl-[4px] outline-none">
            <option>General</option>
          </select>
          <Chevron />
        </div>
      </div>
      <div className="relative mt-[6px] grid h-[235px] grid-cols-[1fr_26px] grid-rows-[1fr_25px] border-2 border-[#b8b8c0] bg-white p-px">
        <div role="listbox" aria-label="Procedures" className="grid auto-rows-fr pt-[4px]">
          {procedures.map((name) => {
            const selected = name === "Static, General";
            return (
              <button
                key={name}
                type="button"
                role="option"
                aria-selected={selected}
                className={`pl-[5px] text-left whitespace-nowrap ${selected ? "bg-[#0078d7] text-white" : ""}`}
              >
                {name}
              </button>
            );
          })}
        </div>
        <div className="ml-[2px] flex justify-center bg-[#f0f0f0] pt-[88px]">
          <span className="h-[77px] w-[3px] rounded-full bg-[#868686]" />
        </div>
        <div className="flex items-center bg-[#f0f0f0] pr-[28px] pl-[25px]">
          <span className="h-[3px] w-full rounded-full bg-[#868686]" />
        </div>
        <div role="tooltip" className="absolute top-[64px] left-[175px] flex h-[32px] w-[90px] items-center justify-center border border-black bg-[#ffffe1]">
          Geostatic
        </div>
      </div>
      <div className="mt-[13px] flex justify-between pr-[25px] pl-[24px]">
        <button type="button" className="h-[32px] w-[114px] rounded-[5px] border border-[#0078d7] bg-[#fdfdfd]">Continue...</button>
        <button type="button" className="h-[32px] w-[114px] rounded-[5px] border border-[#cfcfcf] bg-[#fdfdfd]">Cancel</button>
      </div>
    </div>
  </section>
);

const App: React.FC = () => (
  <div className={`relative flex h-screen flex-col overflow-hidden bg-[#fbfbfb] text-[17px] leading-[24px] text-[#1c1c1c] ${FONT}`}>
    <Defs />
    <TopToolbar />
    <ViewToolbar />
    <div className="flex min-h-0 flex-1">
      <LeftPanel />
      <div className="ml-[8px] flex min-w-0 flex-1 flex-col">
        <div className="flex h-[48px] shrink-0 items-center gap-[19px] overflow-hidden bg-linear-to-b from-[#fbfbfb] to-[#ececec] pl-[12px]">
          <ModuleField id="module" label="Module:" value="Step" labelWidth="w-[73px]" width="w-[161px]" />
          <ModuleField id="model" label="Model:" value="Model-1" labelWidth="w-[63px]" width="w-[132px]" muted />
          <ModuleField id="step" label="Step:" value="Initial" labelWidth="w-[47px]" width="w-[132px]" muted />
        </div>
        <div className="flex min-h-0 flex-1">
          <Toolbox />
          <Viewport />
        </div>
        <div className="flex h-[22px] shrink-0 items-start gap-[8px] overflow-hidden border-t border-[#b0a8a4] bg-[#f5f5f5] pt-[7px] pl-[11px]">
          <button type="button" aria-label="Previous" className="flex h-[26px] w-[26px] shrink-0 justify-center rounded-[4px] border border-[#d8d8d8] bg-[#f6f6f6] pt-[6px]">
            <Svg w={12} h={14}><path d="M9 0V14L1 7Z" fill="#9a9a9a" /></Svg>
          </button>
          <button type="button" aria-label="Cancel procedure" className="flex h-[26px] w-[26px] shrink-0 justify-center rounded-[4px] border border-[#d0d0d0] bg-white pt-[6px]">
            <Svg w={18} h={16}><path d="M1 1L16 15M16 1L2 15" stroke="#e81616" strokeWidth="3" /></Svg>
          </button>
        </div>
      </div>
    </div>
    <CreateStepDialog />
  </div>
);

export default App;
